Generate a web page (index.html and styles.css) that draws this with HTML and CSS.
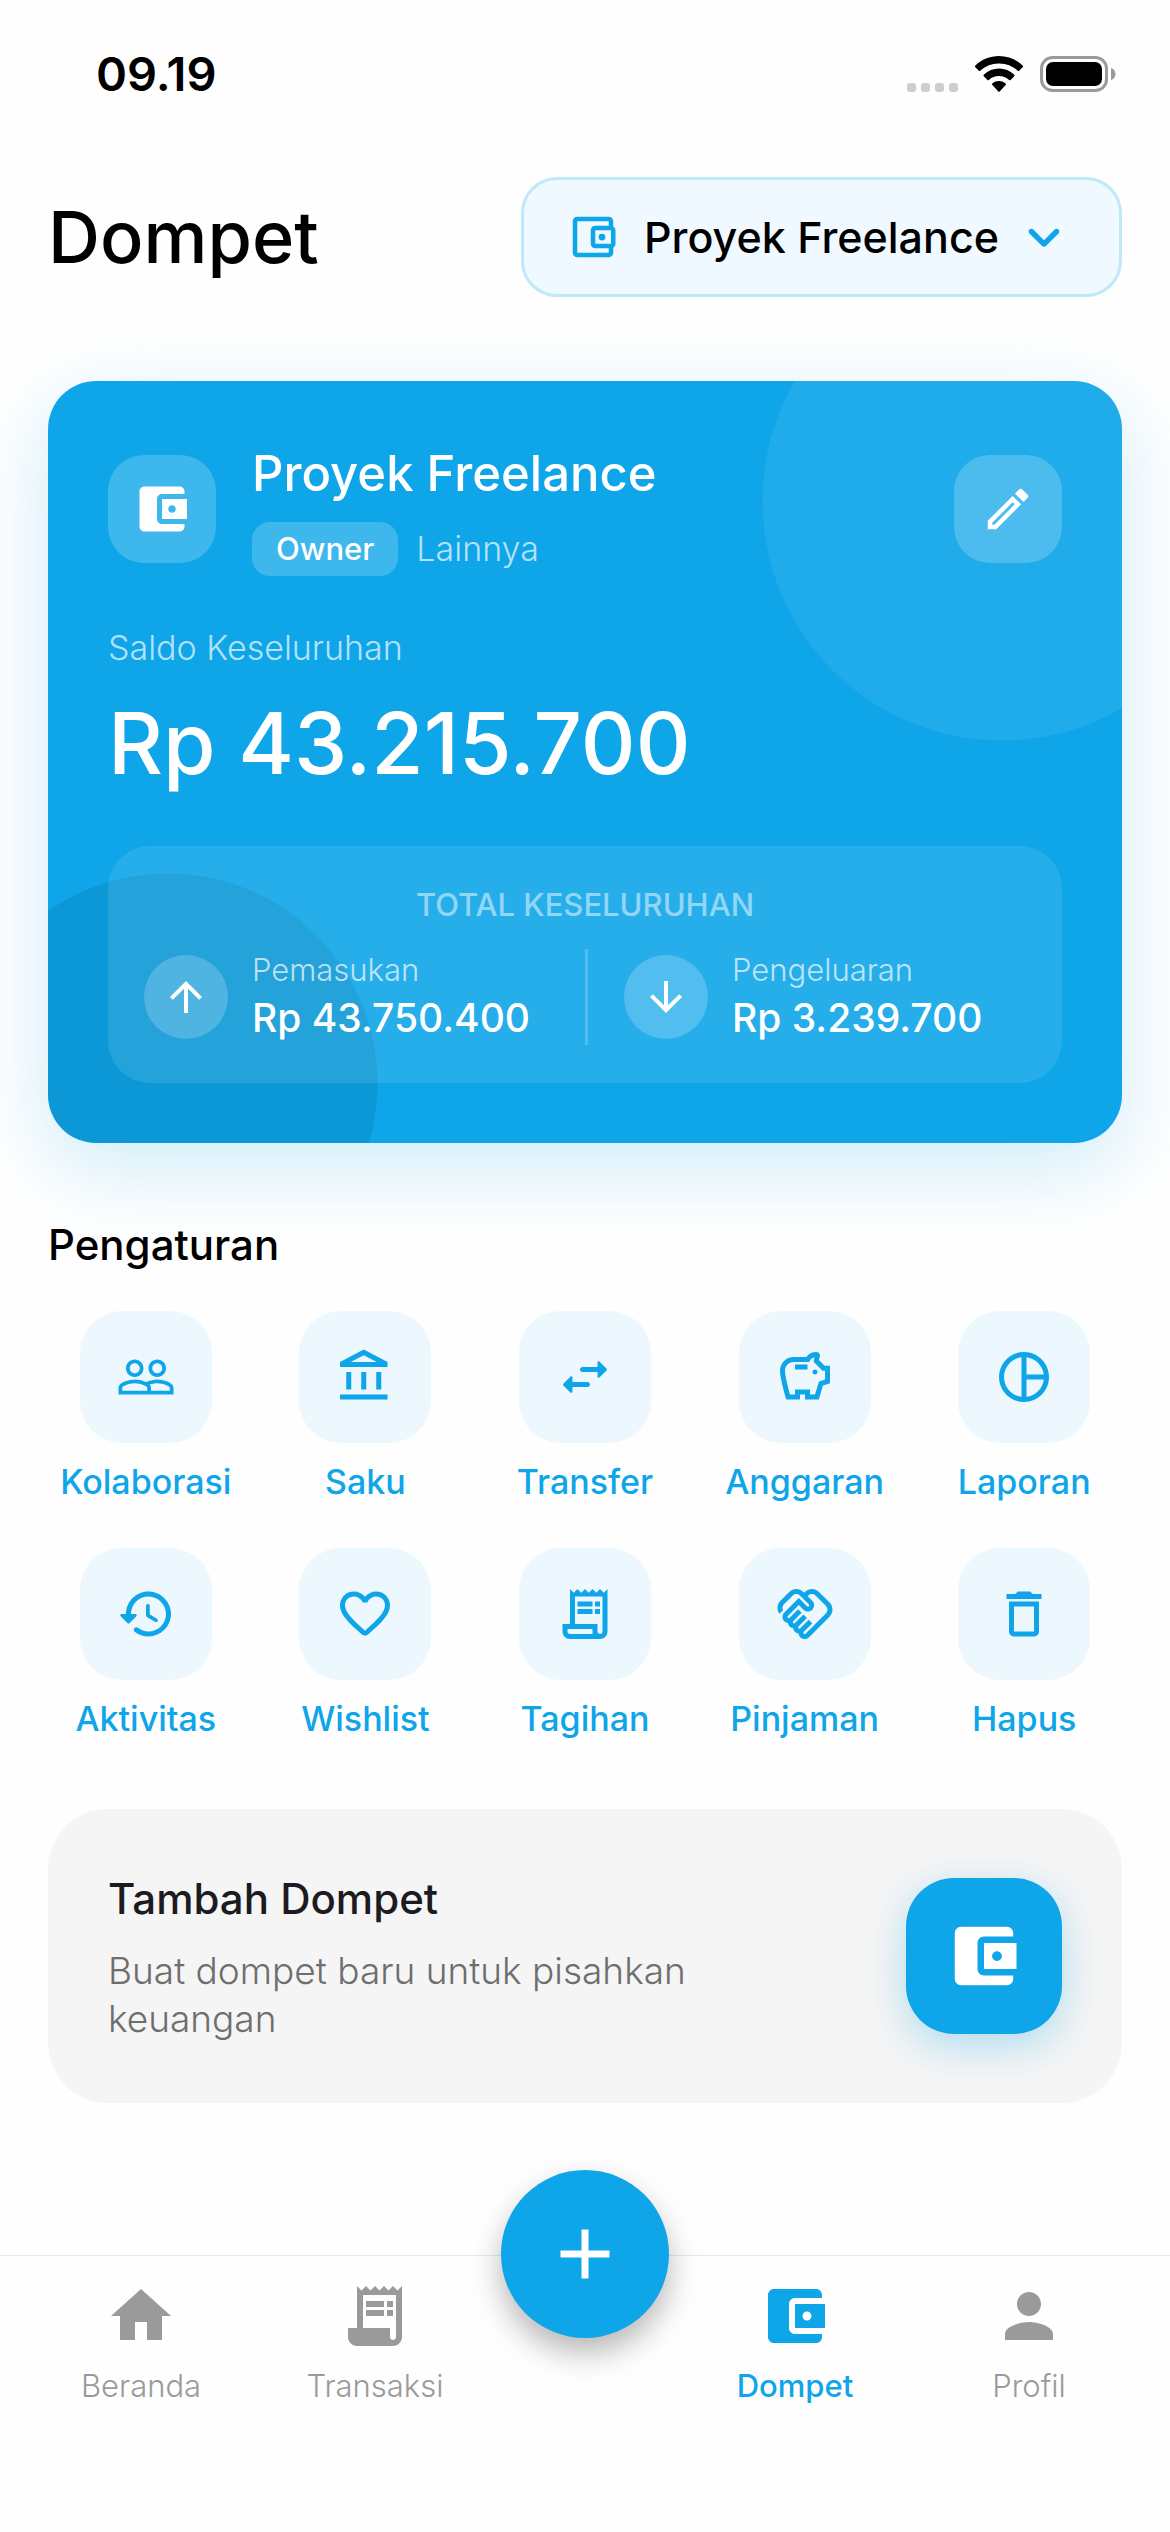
FILE: index.html
```html
<!DOCTYPE html>
<html lang="id">
<head>
<meta charset="utf-8">
<meta name="viewport" content="width=device-width, initial-scale=1">
<title>Dompet</title>
<link rel="stylesheet" href="styles.css">
</head>
<body>
<svg class="sprite" aria-hidden="true">
  <symbol id="wallet" viewBox="0 0 24 24"><path d="M21 18v1c0 1.1-.9 2-2 2H5c-1.11 0-2-.9-2-2V5c0-1.1.89-2 2-2h14c1.1 0 2 .9 2 2v1h-9c-1.11 0-2 .9-2 2v8c0 1.1.89 2 2 2h9zm-9-2h10V8H12v8zm4-2.5c-.83 0-1.5-.67-1.5-1.5s.67-1.5 1.5-1.5 1.5.67 1.5 1.5-.67 1.5-1.5 1.5z"/></symbol>
  <symbol id="wallet-outline" viewBox="0 0 24 24"><path d="M21 7.28V5c0-1.1-.9-2-2-2H5c-1.11 0-2 .9-2 2v14c0 1.1.89 2 2 2h14c1.1 0 2-.9 2-2v-2.28c.59-.35 1-.98 1-1.72V9c0-.74-.41-1.37-1-1.72zM20 9v6h-7V9h7zM5 19V5h14v2h-6c-1.1 0-2 .9-2 2v6c0 1.1.9 2 2 2h6v2H5z"/><circle cx="16" cy="12" r="1.5"/></symbol>
  <symbol id="chevron" viewBox="0 0 24 24"><path d="M8.12 9.29L12 13.17l3.88-3.88c.39-.39 1.02-.39 1.41 0 .39.39.39 1.02 0 1.41l-4.59 4.59c-.39.39-1.02.39-1.41 0L6.7 10.7c-.39-.39-.39-1.02 0-1.41.39-.38 1.03-.39 1.42 0z"/></symbol>
  <symbol id="edit" viewBox="0 0 24 24"><path d="M14.06 9.02l.92.92L5.92 19H5v-.92l9.06-9.06M17.66 3c-.25 0-.51.1-.7.29l-1.83 1.83 3.75 3.75 1.83-1.83c.39-.39.39-1.02 0-1.41l-2.34-2.34c-.2-.2-.45-.29-.71-.29zm-3.6 3.19L3 17.25V21h3.75L17.81 9.94l-3.75-3.75z"/></symbol>
  <symbol id="arrow-up" viewBox="0 0 24 24"><path d="M4 12l1.41 1.41L11 7.83V20h2V7.83l5.58 5.59L20 12l-8-8-8 8z"/></symbol>
  <symbol id="arrow-down" viewBox="0 0 24 24"><path d="M20 12l-1.41-1.41L13 16.17V4h-2v12.17l-5.58-5.59L4 12l8 8 8-8z"/></symbol>
  <symbol id="people" viewBox="0 0 24 24"><path d="M16.5 13c-1.2 0-3.07.34-4.5 1-1.43-.67-3.3-1-4.5-1C5.33 13 1 14.08 1 16.25V19h22v-2.75c0-2.17-4.33-3.25-6.5-3.25zm-4 4.5h-10v-1.25c0-.54 2.56-1.75 5-1.75s5 1.21 5 1.75v1.25zm9 0H14v-1.25c0-.46-.2-.86-.52-1.22.88-.3 1.96-.53 3.02-.53 2.44 0 5 1.21 5 1.75v1.25zM7.5 12c1.93 0 3.5-1.57 3.5-3.5S9.43 5 7.5 5 4 6.57 4 8.5 5.57 12 7.5 12zm0-5.5c1.1 0 2 .9 2 2s-.9 2-2 2-2-.9-2-2 .9-2 2-2zm9 5.5c1.93 0 3.5-1.57 3.5-3.5S18.43 5 16.5 5 13 6.57 13 8.5s1.57 3.5 3.5 3.5zm0-5.5c1.1 0 2 .9 2 2s-.9 2-2 2-2-.9-2-2 .9-2 2-2z"/></symbol>
  <symbol id="bank" viewBox="0 0 24 24"><path d="M6.5 10h-2v7h2v-7zm6 0h-2v7h2v-7zm8.5 9H2v2h19v-2zm-2.5-9h-2v7h2v-7zm-7-6.74L16.71 6H6.29l5.21-2.74m0-2.26L2 6v2h19V6l-9.5-5z"/></symbol>
  <symbol id="swap" viewBox="0 0 24 24"><path d="M6.14 11.86l-2.78 2.79c-.19.2-.19.51 0 .71l2.78 2.79c.31.32.85.09.85-.35V16H13c.55 0 1-.45 1-1s-.45-1-1-1H6.99v-1.79c0-.45-.54-.67-.85-.35zm14.51-3.21l-2.78-2.79c-.31-.32-.85-.09-.85.35V8H11c-.55 0-1 .45-1 1s.45 1 1 1h6.01v1.79c0 .45.54.67.85.35l2.78-2.79c.2-.19.2-.51.01-.7z"/></symbol>
  <symbol id="savings" viewBox="0 0 24 24"><path d="M15 10c0-.55.45-1 1-1s1 .45 1 1-.45 1-1 1-1-.45-1-1zM8 9h5V7H8v2zm14-1.5v6.97l-2.82.94L17.5 21H12v-2h-2v2H4.5S2 12.54 2 9.5C2 6.46 4.46 4 7.5 4h5c.91-1.21 2.36-2 4-2 .83 0 1.5.67 1.5 1.5 0 .21-.04.4-.12.58-.14.34-.26.73-.32 1.15L19.84 7.5H22zm-2 2h-1L15.5 6c0-.65.09-1.29.26-1.91-.97.25-1.76.97-2.09 1.91H7.5C5.57 6 4 7.57 4 9.5c0 1.88 1.22 6.65 2.01 9.5H8v-2h6v2h2.01l1.55-5.15 2.44-.82V9.5z"/></symbol>
  <symbol id="pie" viewBox="0 0 24 24"><path d="M12 2C6.48 2 2 6.48 2 12s4.48 10 10 10 10-4.48 10-10S17.52 2 12 2zm1 2.07c3.61.45 6.48 3.33 6.93 6.93H13V4.07zM4 12c0-4.06 3.07-7.44 7-7.93v15.87c-3.93-.5-7-3.88-7-7.94zm9 7.93V13h6.93c-.45 3.61-3.32 6.48-6.93 6.93z"/></symbol>
  <symbol id="history" viewBox="0 0 24 24"><path d="M13.26 3C8.17 2.86 4 6.95 4 12H2.21c-.45 0-.67.54-.35.85l2.79 2.8c.2.2.51.2.71 0l2.79-2.8c.31-.31.09-.85-.36-.85H6c0-3.9 3.18-7.05 7.1-7 3.72.05 6.85 3.18 6.9 6.9.05 3.91-3.1 7.1-7 7.1-1.61 0-3.1-.55-4.28-1.48-.4-.31-.96-.28-1.32.08-.42.42-.39 1.13.08 1.49C9 20.29 10.91 21 13 21c5.05 0 9.14-4.17 9-9.26-.13-4.69-4.05-8.61-8.74-8.74zm-.51 5c-.41 0-.75.34-.75.75v3.68c0 .35.19.68.49.86l3.12 1.85c.36.21.82.09 1.03-.26.21-.36.09-.82-.26-1.03l-2.88-1.71v-3.4c0-.4-.34-.74-.75-.74z"/></symbol>
  <symbol id="heart" viewBox="0 0 24 24"><path d="M19.66 3.99c-2.64-1.8-5.9-.96-7.66 1.1-1.76-2.06-5.02-2.91-7.66-1.1-1.4.96-2.28 2.58-2.34 4.29-.14 3.88 3.3 6.99 8.55 11.76l.1.09c.76.69 1.93.69 2.69-.01l.11-.1c5.25-4.76 8.68-7.87 8.55-11.75-.06-1.7-.94-3.32-2.34-4.28zM12.1 18.55l-.1.1-.1-.1C7.14 14.24 4 11.39 4 8.5 4 6.5 5.5 5 7.5 5c1.54 0 3.04.99 3.57 2.36h1.87C13.46 5.99 14.96 5 16.5 5c2 0 3.5 1.5 3.5 3.5 0 2.89-3.14 5.74-7.9 10.05z"/></symbol>
  <symbol id="receipt-outline" viewBox="0 0 24 24"><path d="M19.5 3.5L18 2l-1.5 1.5L15 2l-1.5 1.5L12 2l-1.5 1.5L9 2 7.5 3.5 6 2v14H3v3c0 1.66 1.34 3 3 3h12c1.66 0 3-1.34 3-3V2l-1.5 1.5zM15 20H6c-.55 0-1-.45-1-1v-1h10v2zm4-1c0 .55-.45 1-1 1s-1-.45-1-1v-3H8V5h11v14z"/><path d="M9 7h6v2H9zM16 7h2v2h-2zM9 10h6v2H9zM16 10h2v2h-2z"/></symbol>
  <symbol id="receipt" viewBox="0 0 24 24"><path d="M19.5 3.5L18 2l-1.5 1.5L15 2l-1.5 1.5L12 2l-1.5 1.5L9 2 7.5 3.5 6 2v14H3v3c0 1.66 1.34 3 3 3h12c1.66 0 3-1.34 3-3V2l-1.5 1.5zM19 19c0 .55-.45 1-1 1s-1-.45-1-1v-3H8V5h11v14z"/><path d="M9 7h6v2H9zM16 7h2v2h-2zM9 10h6v2H9zM16 10h2v2h-2z"/></symbol>
  <symbol id="handshake" viewBox="0 0 24 24"><path d="M12.22,19.85c-0.18,0.18-0.5,0.21-0.71,0c-0.18-0.18-0.21-0.5,0-0.71l3.39-3.39l-1.41-1.41l-3.39,3.39c-0.19,0.2-0.51,0.19-0.71,0c-0.21-0.21-0.18-0.53,0-0.71l3.39-3.39l-1.41-1.41l-3.39,3.39c-0.18,0.18-0.5,0.21-0.71,0c-0.19-0.19-0.19-0.51,0-0.71l3.39-3.39L9.24,10.1l-3.39,3.39c-0.18,0.18-0.5,0.21-0.71,0c-0.19-0.2-0.19-0.51,0-0.71L9.52,8.4l1.87,1.86c0.95,0.95,2.59,0.94,3.54,0c0.98-0.98,0.98-2.56,0-3.54l-1.86-1.86l0.28-0.28c0.78-0.78,2.05-0.78,2.83,0l4.24,4.24c0.78,0.78,0.78,2.05,0,2.83L12.22,19.85z M21.83,13.07c1.56-1.56,1.56-4.09,0-5.66l-4.24-4.24c-1.56-1.56-4.09-1.56-5.66,0l-0.28,0.28l-0.28-0.28c-1.56-1.56-4.09-1.56-5.66,0L2.17,6.71C0.75,8.13,0.62,10.34,1.77,11.9l1.45-1.45C2.83,9.7,2.96,8.75,3.59,8.12l3.54-3.54c0.78-0.78,2.05-0.78,2.83,0l3.56,3.56c0.18,0.18,0.21,0.5,0,0.71c-0.21,0.21-0.53,0.18-0.71,0L9.52,5.57l-5.8,5.79c-0.98,0.97-0.98,2.56,0,3.54c0.39,0.39,0.89,0.63,1.42,0.7c0.07,0.52,0.3,1.02,0.7,1.42c0.4,0.4,0.9,0.63,1.42,0.7c0.07,0.52,0.3,1.02,0.7,1.42c0.4,0.4,0.9,0.63,1.42,0.7c0.07,0.54,0.31,1.03,0.7,1.42c0.47,0.47,1.1,0.73,1.77,0.73c0.67,0,1.3-0.26,1.77-0.73L21.83,13.07z"/></symbol>
  <symbol id="trash" viewBox="0 0 24 24"><path d="M6 19c0 1.1.9 2 2 2h8c1.1 0 2-.9 2-2V7H6v12zM8 9h8v10H8V9zm7.5-5l-1-1h-5l-1 1H5v2h14V4z"/></symbol>
  <symbol id="home" viewBox="0 0 24 24"><path d="M10 20v-6h4v6h5v-8h3L12 3 2 12h3v8z"/></symbol>
  <symbol id="person" viewBox="0 0 24 24"><path d="M12 12c2.21 0 4-1.79 4-4s-1.79-4-4-4-4 1.79-4 4 1.79 4 4 4zm0 2c-2.67 0-8 1.34-8 4v2h16v-2c0-2.66-5.33-4-8-4z"/></symbol>
  <symbol id="plus" viewBox="0 0 24 24"><path d="M19 13h-6v6h-2v-6H5v-2h6V5h2v6h6v2z"/></symbol>
</svg>

<div class="status">
  <time class="status-time">09.19</time>
  <div class="status-icons">
    <svg class="signal" viewBox="0 0 51 9" aria-hidden="true"><rect width="9" height="9" rx="3"/><rect x="14" width="9" height="9" rx="3"/><rect x="28" width="9" height="9" rx="3"/><rect x="42" width="9" height="9" rx="3"/></svg>
    <svg class="wifi" viewBox="0 0 48 36" aria-hidden="true"><path d="M24 0C14.8 0 6.5 3.5.4 9.4a1.3 1.3 0 0 0 0 1.9l3.2 3.3a1.3 1.3 0 0 0 1.9 0A26.5 26.5 0 0 1 24 7.4a26.5 26.5 0 0 1 18.5 7.2 1.3 1.3 0 0 0 1.9 0l3.2-3.3a1.3 1.3 0 0 0 0-1.9C41.5 3.5 33.2 0 24 0z"/><path d="M24 12.6c-5.8 0-11 2.2-15 5.8a1.3 1.3 0 0 0 0 2l3.2 3.3a1.3 1.3 0 0 0 1.9 0A14.6 14.6 0 0 1 24 20c3.8 0 7.3 1.4 9.9 3.7a1.3 1.3 0 0 0 1.9 0l3.2-3.3a1.3 1.3 0 0 0 0-2c-4-3.6-9.2-5.8-15-5.8z"/><path d="M24 25c-2.5 0-4.7.9-6.4 2.3a1.3 1.3 0 0 0 0 2l5.5 5.9a1.2 1.2 0 0 0 1.8 0l5.5-5.9a1.3 1.3 0 0 0 0-2A10 10 0 0 0 24 25z"/></svg>
    <svg class="battery" viewBox="0 0 76 36" aria-hidden="true"><rect x="1.5" y="1.5" width="65" height="33" rx="11" fill="none" stroke="#9a9a9a" stroke-width="3"/><rect x="6" y="6" width="56" height="24" rx="7"/><path d="M71 12v12c3-1.2 4.5-3.5 4.5-6S74 13.2 71 12z" fill="#9a9a9a"/></svg>
  </div>
</div>

<main class="page">
  <header class="header">
    <h1 class="page-title">Dompet</h1>
    <label class="picker">
      <svg class="icon-54" aria-hidden="true"><use href="#wallet-outline"/></svg>
      <select class="picker-select" aria-label="Pilih dompet"><option>Proyek Freelance</option></select>
      <svg class="icon-66" aria-hidden="true"><use href="#chevron"/></svg>
    </label>
  </header>

  <section class="card">
    <div class="card-head">
      <span class="glass"><svg class="icon-60" aria-hidden="true"><use href="#wallet"/></svg></span>
      <div class="card-id">
        <h2 class="card-name">Proyek Freelance</h2>
        <div class="card-meta"><span class="badge">Owner</span><span class="card-kind">Lainnya</span></div>
      </div>
      <button class="glass" type="button" aria-label="Ubah dompet"><svg class="icon-54" aria-hidden="true"><use href="#edit"/></svg></button>
    </div>
    <p class="balance-label">Saldo Keseluruhan</p>
    <p class="balance">Rp 43.215.700</p>
    <div class="totals">
      <h3 class="totals-title">TOTAL KESELURUHAN</h3>
      <div class="totals-row">
        <div class="flow">
          <span class="flow-icon"><svg class="icon-48" aria-hidden="true"><use href="#arrow-up"/></svg></span>
          <div><p class="flow-label">Pemasukan</p><p class="flow-value">Rp 43.750.400</p></div>
        </div>
        <div class="flow flow-out">
          <span class="flow-icon"><svg class="icon-48" aria-hidden="true"><use href="#arrow-down"/></svg></span>
          <div><p class="flow-label">Pengeluaran</p><p class="flow-value">Rp 3.239.700</p></div>
        </div>
      </div>
    </div>
  </section>

  <section class="settings">
    <h2 class="section-title">Pengaturan</h2>
    <div class="actions">
      <a class="action" href="#"><span class="tile"><svg class="icon-60" aria-hidden="true"><use href="#people"/></svg></span>Kolaborasi</a>
      <a class="action" href="#"><span class="tile"><svg class="icon-60" aria-hidden="true"><use href="#bank"/></svg></span>Saku</a>
      <a class="action" href="#"><span class="tile"><svg class="icon-60" aria-hidden="true"><use href="#swap"/></svg></span>Transfer</a>
      <a class="action" href="#"><span class="tile"><svg class="icon-60" aria-hidden="true"><use href="#savings"/></svg></span>Anggaran</a>
      <a class="action" href="#"><span class="tile"><svg class="icon-60" aria-hidden="true"><use href="#pie"/></svg></span>Laporan</a>
      <a class="action" href="#"><span class="tile"><svg class="icon-60" aria-hidden="true"><use href="#history"/></svg></span>Aktivitas</a>
      <a class="action" href="#"><span class="tile"><svg class="icon-60" aria-hidden="true"><use href="#heart"/></svg></span>Wishlist</a>
      <a class="action" href="#"><span class="tile"><svg class="icon-60" aria-hidden="true"><use href="#receipt-outline"/></svg></span>Tagihan</a>
      <a class="action" href="#"><span class="tile"><svg class="icon-60" aria-hidden="true"><use href="#handshake"/></svg></span>Pinjaman</a>
      <a class="action" href="#"><span class="tile"><svg class="icon-60" aria-hidden="true"><use href="#trash"/></svg></span>Hapus</a>
    </div>
  </section>

  <section class="add">
    <div class="add-text">
      <h2 class="add-title">Tambah Dompet</h2>
      <p class="add-desc">Buat dompet baru untuk pisahkan keuangan</p>
    </div>
    <button class="add-button" type="button" aria-label="Tambah dompet"><svg class="icon-78" aria-hidden="true"><use href="#wallet"/></svg></button>
  </section>
</main>

<nav class="tabs">
  <a class="tab" href="#"><svg class="icon-72" aria-hidden="true"><use href="#home"/></svg>Beranda</a>
  <a class="tab" href="#"><svg class="icon-72" aria-hidden="true"><use href="#receipt"/></svg>Transaksi</a>
  <a class="tab tab-right tab-active" href="#" aria-current="page"><svg class="icon-72" aria-hidden="true"><use href="#wallet"/></svg>Dompet</a>
  <a class="tab" href="#"><svg class="icon-72" aria-hidden="true"><use href="#person"/></svg>Profil</a>
  <button class="fab" type="button" aria-label="Tambah transaksi"><svg class="icon-84" aria-hidden="true"><use href="#plus"/></svg></button>
</nav>
</body>
</html>
```
FILE: styles.css
```css
:root {
  --blue: #0ea5e9;
  --glass: rgba(255, 255, 255, 0.2);
}

* {
  box-sizing: border-box;
}

body {
  margin: 0;
  min-height: 100vh;
  display: flex;
  flex-direction: column;
  overflow-x: hidden;
  background: #fefefe;
  color: #000;
  font-family: Inter, "Liberation Sans", sans-serif;
}

h1, h2, h3, p {
  margin: 0;
  font-weight: 500;
}

button {
  border: 0;
  padding: 0;
  color: inherit;
  font: inherit;
  cursor: pointer;
}

a {
  color: inherit;
  text-decoration: none;
}

svg {
  display: block;
  flex: none;
  fill: currentColor;
}

.sprite {
  position: absolute;
  width: 0;
  height: 0;
}

.icon-48 { width: 48px; height: 48px; }
.icon-54 { width: 54px; height: 54px; }
.icon-60 { width: 60px; height: 60px; }
.icon-66 { width: 66px; height: 66px; }
.icon-72 { width: 72px; height: 72px; }
.icon-78 { width: 78px; height: 78px; }
.icon-84 { width: 84px; height: 84px; }

/* Status bar */
.status {
  display: flex;
  justify-content: space-between;
  align-items: center;
  height: 148px;
  padding: 0 54px 0 96px;
}

.status-time {
  font-size: 47px;
  line-height: 60px;
  font-weight: 600;
}

.status-icons {
  display: flex;
  align-items: flex-end;
  gap: 17px;
}

.signal { width: 51px; height: 9px; color: #cdcdcd; }
.wifi { width: 48px; height: 36px; }
.battery { width: 76px; height: 36px; }

/* Page */
.page {
  padding: 29px 48px 150px;
}

.header {
  display: flex;
  justify-content: space-between;
  align-items: center;
}

.page-title {
  font-size: 72px;
  line-height: 96px;
}

.picker {
  display: flex;
  align-items: center;
  height: 120px;
  padding: 0 42px;
  border: 3px solid #c0e8fb;
  border-radius: 36px;
  background: #f0f9ff;
  color: var(--blue);
}

.picker-select {
  appearance: none;
  margin: 0 12px 0 24px;
  padding: 0;
  border: 0;
  background: transparent;
  color: #000;
  font: 500 43px/60px Inter, "Liberation Sans", sans-serif;
}

/* Wallet card */
.card {
  position: relative;
  z-index: 0;
  margin-top: 84px;
  padding: 60px;
  border-radius: 48px;
  background: var(--blue);
  box-shadow: 0 24px 80px rgba(14, 165, 233, 0.2);
  color: #fff;
}

.card::before {
  content: "";
  position: absolute;
  inset: 0;
  z-index: -1;
  border-radius: inherit;
  background:
    radial-gradient(circle 240px at calc(100% - 120px) 120px, rgba(255, 255, 255, 0.08) 239px, transparent 240px),
    radial-gradient(circle 210px at 120px calc(100% - 60px), rgba(0, 0, 0, 0.08) 209px, transparent 210px);
}

.card-head {
  display: flex;
  align-items: center;
  gap: 36px;
}

.glass {
  display: flex;
  justify-content: center;
  align-items: center;
  flex: none;
  width: 108px;
  height: 108px;
  border-radius: 36px;
  background: var(--glass);
}

.card-id {
  flex: 1;
}

.card-name {
  font-size: 49px;
  line-height: 66px;
}

.card-meta {
  display: flex;
  align-items: center;
  gap: 18px;
  margin-top: 15px;
}

.badge {
  padding: 0 24px;
  border-radius: 18px;
  background: var(--glass);
  font-size: 31px;
  line-height: 54px;
  font-weight: 500;
}

.card-kind,
.balance-label {
  color: rgba(255, 255, 255, 0.7);
  font-size: 34px;
  line-height: 48px;
  font-weight: 300;
}

.balance-label {
  margin-top: 48px;
}

.balance {
  margin-top: 18px;
  font-size: 85px;
  line-height: 108px;
}

.totals {
  margin-top: 48px;
  padding: 36px 36px 38px;
  border-radius: 42px;
  background: rgba(255, 255, 255, 0.1);
}

.totals-title {
  color: rgba(255, 255, 255, 0.5);
  font-size: 31px;
  line-height: 46px;
  text-align: center;
}

.totals-row {
  display: grid;
  grid-template-columns: 1fr 1fr;
  margin-top: 21px;
}

.flow {
  display: flex;
  align-items: center;
  gap: 24px;
}

.flow-out {
  padding-left: 36px;
  border-left: 3px solid var(--glass);
}

.flow-icon {
  display: flex;
  justify-content: center;
  align-items: center;
  width: 84px;
  height: 84px;
  border-radius: 50%;
  background: var(--glass);
}

.flow-label {
  color: rgba(255, 255, 255, 0.7);
  font-size: 31px;
  line-height: 42px;
  font-weight: 300;
}

.flow-value {
  font-size: 39px;
  line-height: 54px;
}

/* Settings grid */
.settings {
  margin-top: 72px;
}

.section-title {
  font-size: 42px;
  line-height: 60px;
}

.actions {
  display: grid;
  grid-template-columns: repeat(5, 1fr);
  gap: 42px 24px;
  margin-top: 36px;
}

.action {
  display: flex;
  flex-direction: column;
  align-items: center;
  gap: 15px;
  color: var(--blue);
  font-size: 34px;
  line-height: 48px;
  font-weight: 500;
}

.tile {
  display: flex;
  justify-content: center;
  align-items: center;
  width: 132px;
  height: 132px;
  border-radius: 42px;
  background: #ecf7fe;
}

/* Add wallet */
.add {
  display: flex;
  align-items: center;
  gap: 72px;
  margin-top: 66px;
  padding: 60px;
  border-radius: 60px;
  background: #f5f5f5;
}

.add-text {
  flex: 1;
}

.add-title {
  color: #1c1b1f;
  font-size: 42px;
  line-height: 60px;
}

.add-desc {
  margin-top: 18px;
  color: #6e6e6e;
  font-size: 37px;
  line-height: 48px;
  font-weight: 300;
}

.add-button {
  display: flex;
  justify-content: center;
  align-items: center;
  flex: none;
  width: 156px;
  height: 156px;
  border-radius: 48px;
  background: var(--blue);
  box-shadow: 0 12px 42px rgba(14, 165, 233, 0.3);
  color: #fff;
}

/* Bottom navigation */
.tabs {
  position: relative;
  display: grid;
  grid-template-columns: repeat(2, 1fr) 186px repeat(2, 1fr);
  margin-top: auto;
  padding: 24px 24px 124px;
  border-top: 1px solid #e6e6e6;
}

.tab {
  display: flex;
  flex-direction: column;
  align-items: center;
  gap: 12px;
  color: #9a9a9a;
  font-size: 31px;
  line-height: 44px;
  font-weight: 300;
}

.tab-right {
  grid-column: 4;
}

.tab-active {
  color: var(--blue);
  font-weight: 500;
}

.fab {
  position: absolute;
  top: -2px;
  left: 50%;
  display: flex;
  justify-content: center;
  align-items: center;
  width: 168px;
  height: 168px;
  border-radius: 50%;
  transform: translate(-50%, -50%);
  background: var(--blue);
  box-shadow: 0 15px 30px rgba(0, 0, 0, 0.28);
  color: #fff;
}
```
